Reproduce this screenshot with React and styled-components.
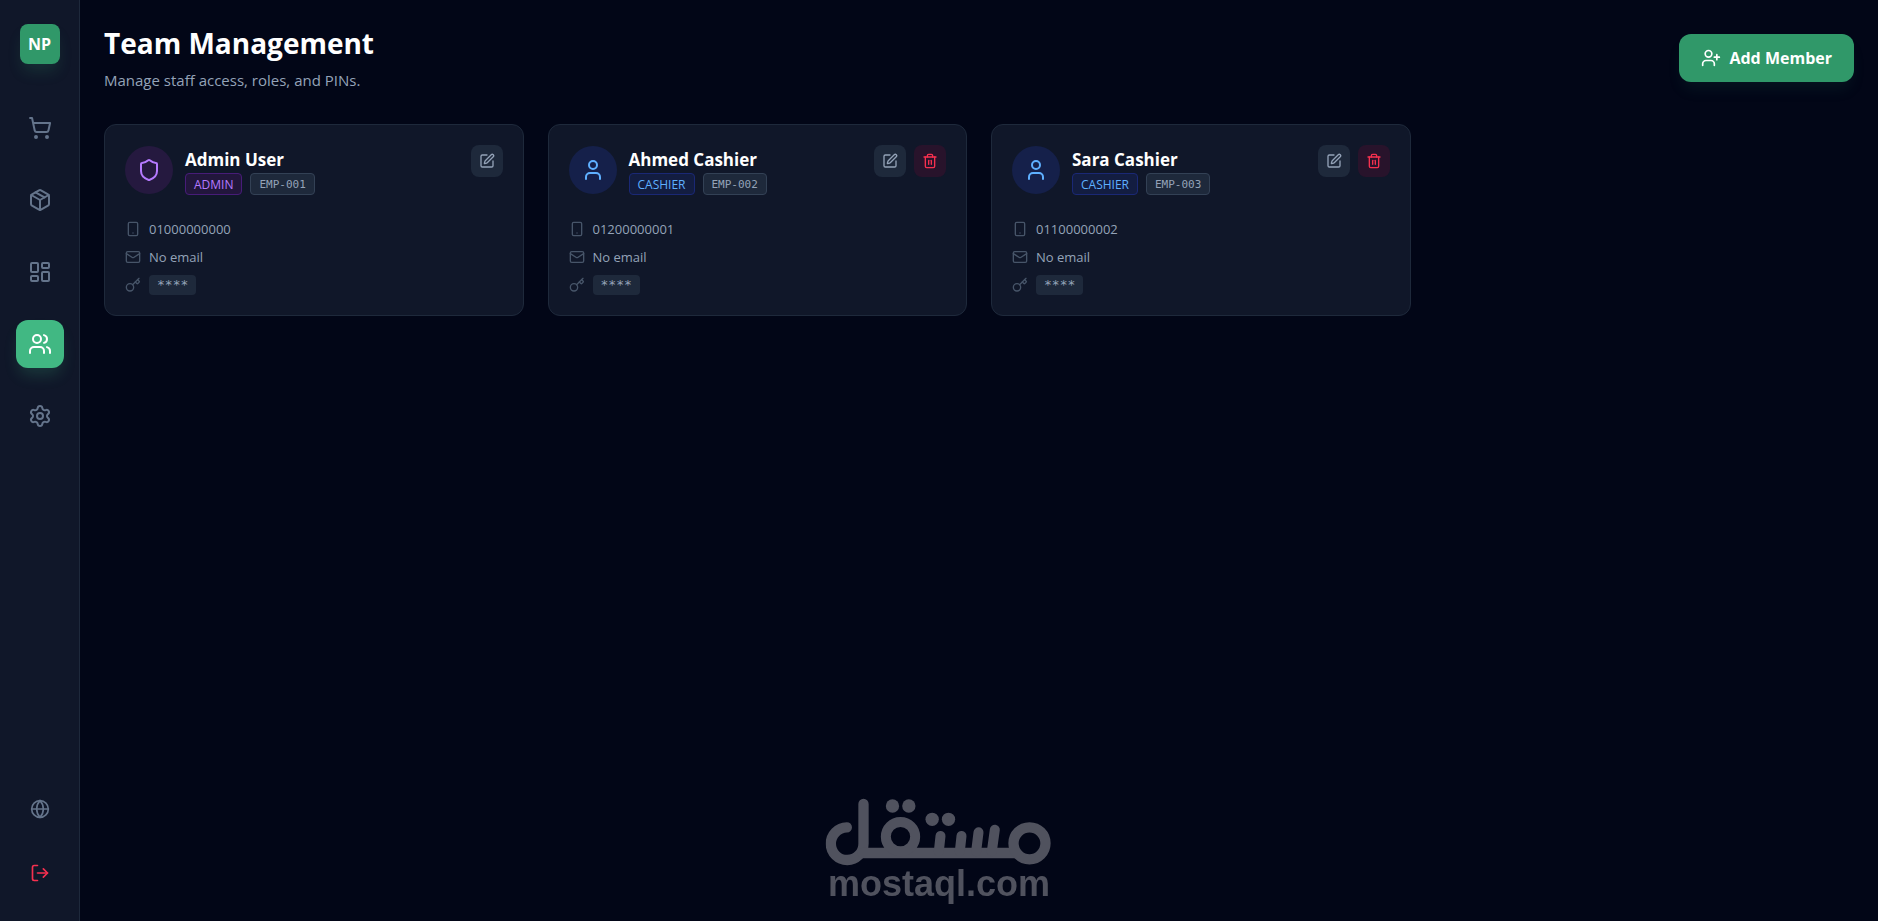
import React from "react";
import styled, { createGlobalStyle } from "styled-components";
import {
  Globe,
  Key,
  LayoutDashboard,
  LogOut,
  Mail,
  Package,
  Settings,
  Shield,
  ShoppingCart,
  Smartphone,
  SquarePen,
  Trash2,
  User,
  UserPlus,
  Users,
} from "lucide-react";

const navItems = [
  { label: "Point of sale", icon: ShoppingCart },
  { label: "Inventory", icon: Package },
  { label: "Dashboard", icon: LayoutDashboard },
  { label: "Team", icon: Users, active: true },
  { label: "Settings", icon: Settings },
];

const members = [
  { name: "Admin User", role: "admin", code: "EMP-001", phone: "01000000000" },
  { name: "Ahmed Cashier", role: "cashier", code: "EMP-002", phone: "01200000001" },
  { name: "Sara Cashier", role: "cashier", code: "EMP-003", phone: "01100000002" },
];

const roleColors = {
  admin: { text: "#b57aff", avatar: "#25193f", badge: "#22163c", border: "#471c78" },
  cashier: { text: "#5fb0ff", avatar: "#15204a", badge: "#131d41", border: "#1a2875" },
};

function Member({ member }) {
  const colors = roleColors[member.role];
  const isAdmin = member.role === "admin";
  const AvatarIcon = isAdmin ? Shield : User;

  return (
    <Card>
      <CardTop>
        <Avatar $colors={colors}>
          <AvatarIcon size={24} />
        </Avatar>
        <Identity>
          <Name>{member.name}</Name>
          <Badges>
            <RoleBadge $colors={colors}>{member.role.toUpperCase()}</RoleBadge>
            <CodeBadge>{member.code}</CodeBadge>
          </Badges>
        </Identity>
        <Actions>
          <ActionButton aria-label={`Edit ${member.name}`}>
            <SquarePen size={16} />
          </ActionButton>
          {!isAdmin && (
            <ActionButton $danger aria-label={`Delete ${member.name}`}>
              <Trash2 size={16} />
            </ActionButton>
          )}
        </Actions>
      </CardTop>
      <Details>
        <Detail>
          <Smartphone size={16} />
          {member.phone}
        </Detail>
        <Detail>
          <Mail size={16} />
          No email
        </Detail>
        <Detail>
          <Key size={16} />
          <Pin>****</Pin>
        </Detail>
      </Details>
    </Card>
  );
}

function Watermark() {
  return (
    <WatermarkBox>
      <svg viewBox="78 55 681 204" width="227" height="68" fill="none" stroke="currentColor" strokeLinecap="round" role="img" aria-label="مستقل">
        <path strokeWidth="31" d="M142 143a49 49 0 1 0 50 49V73" />
        <path strokeWidth="32" d="M190 220H645" />
        <circle strokeWidth="30" cx="303" cy="171" r="44" />
        <circle strokeWidth="31" cx="690" cy="191" r="48" />
        <path strokeWidth="30" d="M423 169 418 215M486 169 481 215M537 158 530 215M586 150 577 215" />
        <g fill="currentColor" stroke="none">
          <circle cx="279" cy="79" r="20" />
          <circle cx="328" cy="79" r="20" />
          <circle cx="398" cy="119" r="20" />
          <circle cx="447" cy="119" r="20" />
        </g>
      </svg>
      <WatermarkText>mostaql.com</WatermarkText>
    </WatermarkBox>
  );
}

export default function App() {
  return (
    <Page>
      <GlobalStyle />
      <Sidebar>
        <Brand>NP</Brand>
        <Nav>
          {navItems.map(({ label, icon: Icon, active }) => (
            <NavLink key={label} href="#" aria-label={label} $active={active}>
              <Icon size={24} />
            </NavLink>
          ))}
        </Nav>
        <SidebarFooter>
          <SidebarButton aria-label="Change language">
            <Globe size={20} />
          </SidebarButton>
          <SidebarButton $danger aria-label="Log out">
            <LogOut size={20} />
          </SidebarButton>
        </SidebarFooter>
      </Sidebar>
      <Main>
        <Header>
          <div>
            <Title>Team Management</Title>
            <Subtitle>Manage staff access, roles, and PINs.</Subtitle>
          </div>
          <AddButton>
            <UserPlus size={20} />
            Add Member
          </AddButton>
        </Header>
        <Grid>
          {members.map((member) => (
            <Member key={member.code} member={member} />
          ))}
        </Grid>
      </Main>
      <Watermark />
    </Page>
  );
}

const GlobalStyle = createGlobalStyle`
  * {
    box-sizing: border-box;
  }

  body {
    margin: 0;
    background: #020617;
    font-family: "Open Sans", "Noto Sans", sans-serif;
  }

  button {
    border: none;
    padding: 0;
    font-family: inherit;
    cursor: pointer;
  }
`;

const Page = styled.div`
  display: flex;
  min-height: 100vh;
`;

// Sidebar
const Sidebar = styled.aside`
  display: flex;
  flex-direction: column;
  align-items: center;
  flex-shrink: 0;
  width: 80px;
  padding: 24px 0;
  background: #101729;
  border-right: 1px solid #1e293b;
`;

const Brand = styled.div`
  display: flex;
  align-items: center;
  justify-content: center;
  width: 40px;
  height: 40px;
  border-radius: 8px;
  background: #309869;
  box-shadow: 0 10px 15px -3px rgba(48, 152, 105, 0.2);
  color: #fff;
  font-size: 16px;
  font-weight: 700;
`;

const Nav = styled.nav`
  display: flex;
  flex-direction: column;
  gap: 24px;
  margin-top: 40px;
`;

const NavLink = styled.a`
  display: flex;
  align-items: center;
  justify-content: center;
  width: 48px;
  height: 48px;
  border-radius: 12px;
  color: ${({ $active }) => ($active ? "#fff" : "#64748b")};
  background: ${({ $active }) => ($active ? "#41b883" : "transparent")};
  box-shadow: ${({ $active }) =>
    $active ? "0 10px 15px -3px rgba(65, 184, 131, 0.2)" : "none"};
`;

const SidebarFooter = styled.div`
  display: flex;
  flex-direction: column;
  gap: 16px;
  margin-top: auto;
`;

const SidebarButton = styled.button`
  display: flex;
  align-items: center;
  justify-content: center;
  width: 48px;
  height: 48px;
  background: transparent;
  color: ${({ $danger }) => ($danger ? "#f6304f" : "#64748b")};
`;

// Page content
const Main = styled.main`
  flex: 1;
  min-width: 0;
  padding: 24px;
`;

const Header = styled.header`
  display: flex;
  align-items: center;
  justify-content: space-between;
  margin-bottom: 32px;
`;

const Title = styled.h1`
  margin: 0 0 6px;
  color: #fff;
  font-size: 28px;
  font-weight: 700;
  line-height: 38px;
`;

const Subtitle = styled.p`
  margin: 0;
  color: #94a3b8;
  font-size: 15px;
  line-height: 24px;
`;

const AddButton = styled.button`
  display: flex;
  align-items: center;
  gap: 8px;
  height: 48px;
  padding: 0 22px;
  border-radius: 12px;
  background: #309869;
  box-shadow: 0 10px 15px -3px rgba(48, 152, 105, 0.1);
  color: #fff;
  font-size: 16px;
  font-weight: 700;
`;

const Grid = styled.section`
  display: grid;
  grid-template-columns: repeat(4, minmax(0, 1fr));
  gap: 24px;
`;

// Member card
const Card = styled.article`
  padding: 20px;
  border: 1px solid #1e293b;
  border-radius: 12px;
  background: #101729;
`;

const CardTop = styled.div`
  display: flex;
  align-items: center;
  gap: 12px;
  margin-bottom: 24px;
`;

const Avatar = styled.div`
  display: flex;
  align-items: center;
  justify-content: center;
  flex-shrink: 0;
  width: 48px;
  height: 48px;
  border-radius: 50%;
  background: ${({ $colors }) => $colors.avatar};
  color: ${({ $colors }) => $colors.text};
`;

const Identity = styled.div`
  flex: 1;
`;

const Name = styled.h2`
  margin: 0;
  padding-top: 2px;
  color: #fff;
  font-size: 17px;
  font-weight: 700;
  line-height: 26px;
`;

const Badges = styled.div`
  display: flex;
  gap: 8px;
`;

const Badge = styled.span`
  padding: 3px 8px 1px;
  border: 1px solid;
  border-radius: 4px;
  line-height: 16px;
`;

const RoleBadge = styled(Badge)`
  border-color: ${({ $colors }) => $colors.border};
  background: ${({ $colors }) => $colors.badge};
  color: ${({ $colors }) => $colors.text};
  font-size: 12px;
`;

const CodeBadge = styled(Badge)`
  border-color: #334155;
  background: #1e293b;
  color: #94a3b8;
  font-family: "DejaVu Sans Mono", monospace;
  font-size: 11px;
`;

const Actions = styled.div`
  display: flex;
  align-self: flex-start;
  gap: 8px;
`;

const ActionButton = styled.button`
  display: flex;
  align-items: center;
  justify-content: center;
  width: 32px;
  height: 32px;
  border-radius: 8px;
  background: ${({ $danger }) => ($danger ? "#28132b" : "#1e293b")};
  color: ${({ $danger }) => ($danger ? "#f6304f" : "#94a3b8")};
`;

const Details = styled.div`
  display: flex;
  flex-direction: column;
  gap: 8px;
`;

const Detail = styled.div`
  display: flex;
  align-items: center;
  gap: 8px;
  color: #94a3b8;
  font-size: 13px;
  line-height: 20px;

  svg {
    color: #475569;
  }
`;

const Pin = styled.span`
  padding: 0 8px;
  border-radius: 4px;
  background: #1e293b;
  font-family: "DejaVu Sans Mono", monospace;
`;

// Watermark
const WatermarkBox = styled.div`
  position: fixed;
  bottom: 19px;
  left: 50%;
  display: flex;
  flex-direction: column;
  align-items: center;
  transform: translateX(-50%);
  color: #50525e;
  pointer-events: none;
`;

const WatermarkText = styled.span`
  font-family: "Liberation Sans", Arial, sans-serif;
  font-size: 36px;
  font-weight: 700;
  line-height: 36px;
`;
